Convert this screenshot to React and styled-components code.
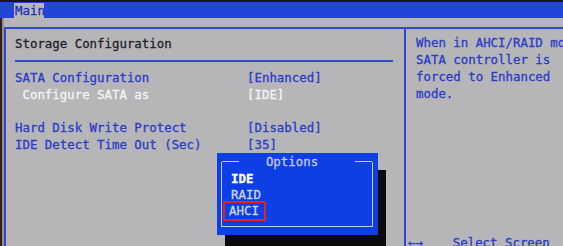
import React from 'react';
import styled, {createGlobalStyle} from 'styled-components';

const GlobalStyle = createGlobalStyle`
  html, body {
    margin: 0;
    padding: 0;
    background: #b6b6b8;
  }
  body {
    font-family: "DejaVu Sans Mono", "Liberation Mono", monospace;
    font-size: 12.4px;
    -webkit-text-stroke: 0.3px currentColor;
  }
`;

const Screen = styled.div`
  width: 563px;
  height: 246px;
  overflow: hidden;
  position: relative;
  display: flex;
  flex-direction: column;
  background: #b6b6b8;
`;

const TopStrip = styled.div`
  height: 2px;
  background: #15161c;
`;

const MenuBar = styled.div`
  height: 16px;
  background: #1f44d6;
  display: flex;
  padding-left: 14px;
`;

const Tab = styled.div`
  margin-top: 1px;
  height: 15px;
  width: 30px;
  box-sizing: border-box;
  padding: 1px 0 0 1px;
  background: #b8b8ba;
  color: #1f30b4;
  line-height: 14px;
  white-space: nowrap;
`;

const Body = styled.div`
  flex: 1;
  display: flex;
  min-height: 0;
`;

const Bezel = styled.div`
  width: 4px;
  flex-shrink: 0;
  background: linear-gradient(to right, #2e211c 0 2px, #a08a84 2px 4px);
`;

const Frame = styled.div`
  flex: 1;
  margin-top: 9px;
  border-top: 2px solid #2f48d8;
  border-left: 2px solid #2f48d8;
  display: flex;
  align-items: flex-start;
`;

const MainPanel = styled.div`
  width: 398px;
  flex-shrink: 0;
  padding: 7.35px 0 0 9px;
  box-sizing: border-box;
`;

const Heading = styled.div`
  color: #1e1e28;
  line-height: 16.8px;
  white-space: pre;
`;

const Rule = styled.div`
  margin: 6.85px 0 0 0;
  width: 378px;
  height: 2px;
  background: #2f48d8;
`;

const Settings = styled.div`
  margin-top: 7.85px;
  display: grid;
  grid-template-columns: 232px 1fr;
  line-height: 16.8px;
  white-space: pre;
`;

const Cell = styled.div`
  color: ${({active}) => (active ? '#f4f4f6' : '#2b3bc8')};
  height: 16.8px;
`;

const HelpPanel = styled.div`
  flex: 1;
  align-self: stretch;
  border-left: 2px solid #2f48d8;
  padding: 6.35px 0 0 10px;
  display: flex;
  flex-direction: column;
  overflow: hidden;
  line-height: 16.8px;
  color: #2b3bc8;
  white-space: pre;
`;

const HelpLine = styled.div`
  height: 16.8px;
`;

const KeyHint = styled.div`
  margin: 132.85px 0 0 -8px;
  height: 16.8px;
`;

const Popup = styled.div`
  position: absolute;
  left: 217px;
  top: 153px;
  width: 161px;
  height: 82px;
  box-sizing: border-box;
  padding: 8.5px 5px 8px 4px;
  background: #0d3fe4;
  box-shadow: 8px 17px 0 0 #0a0a0a;
  display: flex;
  flex-direction: column;
`;

const InnerFrame = styled.div`
  flex: 1;
  border: 1.5px solid #c9cad4;
  border-top: none;
  display: flex;
  flex-direction: column;
`;

const TitleRow = styled.div`
  margin-top: -8px;
  height: 16px;
  display: flex;
  align-items: center;
`;

const Segment = styled.div`
  width: 17px;
  height: 1.5px;
  background: #c9cad4;
`;

const Title = styled.div`
  flex: 1;
  text-align: center;
  padding-right: 10px;
  line-height: 16px;
  color: #c4c8e2;
`;

const OptionList = styled.div`
  margin-top: 1.5px;
  padding-left: 9px;
  display: flex;
  flex-direction: column;
  align-items: flex-start;
`;

const Option = styled.div`
  line-height: 16px;
  height: 16px;
  color: ${({current}) => (current ? '#ffffff' : '#d0d5ee')};
  font-weight: ${({current}) => (current ? 700 : 400)};
  ${({marked}) => marked && `
    margin-left: -5.7px;
    padding: 0 5.5px 0 3.7px;
    outline: 2px solid #e4241c;
  `}
`;

const settings = [
  {label: 'SATA Configuration', value: '[Enhanced]'},
  {label: ' Configure SATA as', value: '[IDE]', active: true},
  {label: '', value: ''},
  {label: 'Hard Disk Write Protect', value: '[Disabled]'},
  {label: 'IDE Detect Time Out (Sec)', value: '[35]'},
];

const help = [
  'When in AHCI/RAID mode,',
  'SATA controller is',
  'forced to Enhanced',
  'mode.',
];

const App = () => (
  <>
    <GlobalStyle/>
    <Screen>
      <TopStrip/>
      <MenuBar>
        <Tab>Main</Tab>
      </MenuBar>
      <Body>
        <Bezel/>
        <Frame>
          <MainPanel>
            <Heading>Storage Configuration</Heading>
            <Rule/>
            <Settings>
              {settings.map((item, index) => (
                <React.Fragment key={index}>
                  <Cell active={item.active}>{item.label}</Cell>
                  <Cell active={item.active}>{item.value}</Cell>
                </React.Fragment>
              ))}
            </Settings>
          </MainPanel>
          <HelpPanel>
            {help.map((line) => (
              <HelpLine key={line}>{line}</HelpLine>
            ))}
            <KeyHint>{'←→    Select Screen'}</KeyHint>
          </HelpPanel>
        </Frame>
      </Body>
      <Popup>
        <InnerFrame>
          <TitleRow>
            <Segment/>
            <Title>Options</Title>
            <Segment/>
          </TitleRow>
          <OptionList>
            <Option current>IDE</Option>
            <Option>RAID</Option>
            <Option marked>AHCI</Option>
          </OptionList>
        </InnerFrame>
      </Popup>
    </Screen>
  </>
);

export default App;
